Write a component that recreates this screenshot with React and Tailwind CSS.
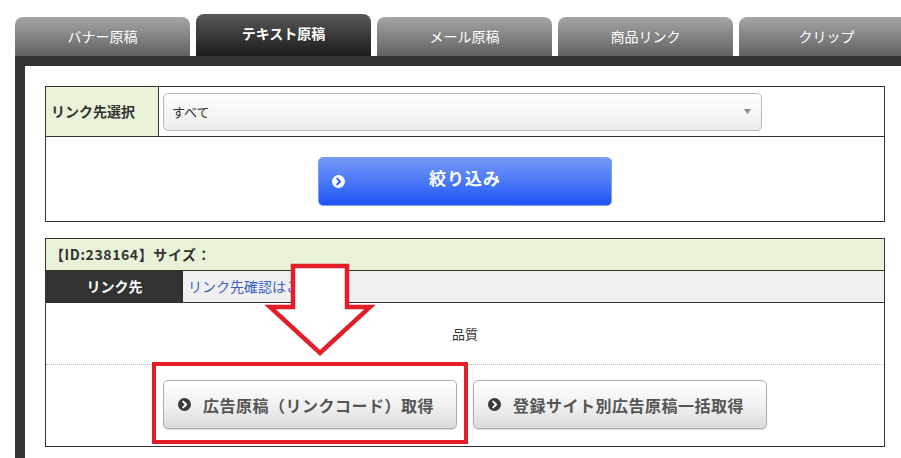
import React from 'react';

const font = { fontFamily: '"Noto Sans CJK JP", "Noto Sans", sans-serif' };

const tabs = ['バナー原稿', 'テキスト原稿', 'メール原稿', '商品リンク', 'クリップ'];

const Chevron = ({ circle, arrow, size = 13 }) => (
    <svg width={size} height={size} viewBox="0 0 14 14" className="shrink-0">
        <circle cx="7" cy="7" r="7" fill={circle} />
        <path d="M5.6 3.9 L8.7 7 L5.6 10.1" fill="none" stroke={arrow} strokeWidth="2.2" strokeLinecap="round" strokeLinejoin="round" />
    </svg>
);

const GrayButton = ({ children }) => (
    <button className="flex h-[49px] w-[294px] items-center rounded-[5px] border border-[#adadad] bg-gradient-to-b from-[#ffffff] via-[#f1f1f1] to-[#dcdcdc] pl-[14px] text-[16px] font-bold text-[#555] shadow-[0_1px_1px_rgba(0,0,0,0.15)]">
        <Chevron circle="#3a3a3a" arrow="#ffffff" />
        <span className="ml-[12px] tracking-[0.5px]">{children}</span>
    </button>
);

const App = () => {
    return (
        <div style={font} className="w-[901px] h-[458px] overflow-hidden bg-white pl-[15px] pt-[14px]">
            {/* tabs */}
            <div className="flex items-end gap-[6px] h-[42px]">
                {tabs.map((t, i) =>
                    i === 1 ? (
                        <div key={t} className="flex h-[42px] w-[175px] shrink-0 items-center justify-center rounded-t-[8px] bg-gradient-to-b from-[#5a5a5a] to-[#1c1c1c] pb-[4px] text-[14px] font-bold text-white">
                            {t}
                        </div>
                    ) : (
                        <div key={t} className="flex h-[39px] w-[175px] shrink-0 items-center justify-center rounded-t-[8px] bg-gradient-to-b from-[#a6a6a6] to-[#626262] text-[14px] text-white">
                            {t}
                        </div>
                    )
                )}
            </div>

            {/* frame */}
            <div className="border-t-[10px] border-l-[10px] border-[#333] pl-[20px] pt-[20px] pb-[20px]">
                {/* filter table */}
                <div className="w-[840px] border border-[#333]">
                    <div className="flex h-[49px]">
                        <div className="flex w-[113px] items-center border-r border-[#333] bg-[#e8f2d6] pl-[5px] text-[14px] font-bold text-[#333]">
                            リンク先選択
                        </div>
                        <div className="flex items-center pl-[4px]">
                            <div className="flex h-[38px] w-[599px] items-center justify-between rounded-[5px] border border-[#b8b8b8] bg-gradient-to-b from-[#ffffff] to-[#ececec] pl-[8px] pr-[10px] text-[13px] text-[#333]">
                                <span>すべて</span>
                                <svg width="7" height="5" viewBox="0 0 7 5"><path d="M0 0 L7 0 L3.5 5 Z" fill="#888" /></svg>
                            </div>
                        </div>
                    </div>
                    <div className="flex h-[85px] justify-center border-t border-[#333] pt-[20px]">
                        <button className="relative flex h-[49px] w-[294px] items-center justify-center rounded-[5px] border border-[#7f9ff3] bg-gradient-to-b from-[#7598f6] to-[#1d52f6] text-[17px] font-bold text-white">
                            <span className="absolute left-[13px] top-[17px]">
                                <Chevron circle="#ffffff" arrow="#2f5ff0" />
                            </span>
                            <span className="-mt-[8px] tracking-[1px]">絞り込み</span>
                        </button>
                    </div>
                </div>

                {/* result table */}
                <div className="relative mt-[16px] w-[840px] border border-[#333]">
                    <div className="flex h-[32px] items-center border-b border-[#333] bg-[#e8f2d6] pl-[4px] text-[14px] font-bold tracking-[0.6px] text-[#333]">
                        【ID:238164】サイズ：
                    </div>
                    <div className="flex h-[32px] border-b border-[#333] bg-[#f0f0f0]">
                        <div className="flex w-[137px] items-center justify-center bg-[#333] text-[14px] font-bold text-white">
                            リンク先
                        </div>
                        <div className="flex items-center pl-[5px] text-[14px] text-[#3b5fc4]">
                            リンク先確認はこちら
                        </div>
                    </div>
                    <div className="flex h-[62px] items-center justify-center border-b border-dotted border-[#bbb] text-[13px] text-[#333]">
                        品質
                    </div>
                    <div className="flex h-[81px] justify-center gap-[16px] pt-[15px]">
                        <GrayButton>広告原稿（リンクコード）取得</GrayButton>
                        <GrayButton>登録サイト別広告原稿一括取得</GrayButton>
                    </div>

                    {/* annotation */}
                    <div className="pointer-events-none absolute left-[106px] top-[123px] h-[82px] w-[316px] border-[4px] border-[#e31e29]" />
                    <svg className="pointer-events-none absolute left-[218px] top-[20px]" width="112" height="100" viewBox="0 0 112 100">
                        <path d="M29 7 L83 7 L83 48 L106 48 L56 94 L6 48 L29 48 Z" fill="#ffffff" stroke="#e31e29" strokeWidth="4.5" strokeLinejoin="miter" />
                    </svg>
                </div>
            </div>
        </div>
    );
};

export default App;
